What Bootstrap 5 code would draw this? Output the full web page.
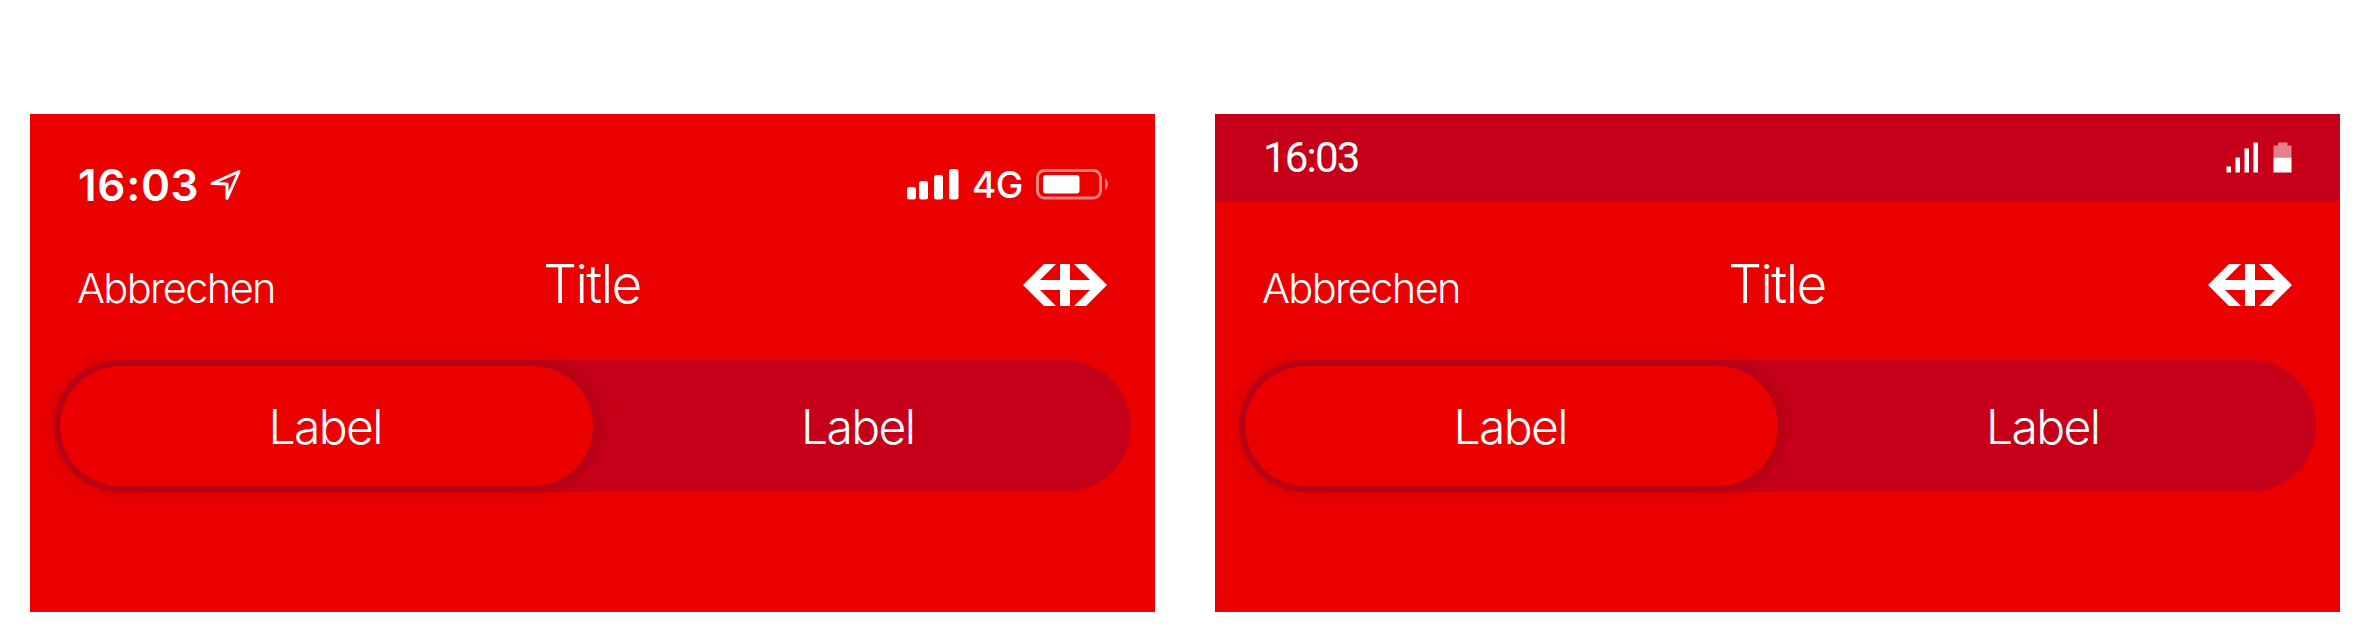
<!DOCTYPE html>
<html lang="de">
<head>
<meta charset="utf-8">
<meta name="viewport" content="width=device-width, initial-scale=1">
<title>Segmented header</title>
<link href="https://cdn.jsdelivr.net/npm/bootstrap@5.3.0/dist/css/bootstrap.min.css" rel="stylesheet">
<style>
  :root { --red: #eb0000; --red-dark: #c60018; }
  body { background: #fff; font-family: Inter, "Liberation Sans", sans-serif; }
  svg { display: block; flex: none; }
  .stage { padding: 114px 30px 30px; gap: 60px; }
  .phone { width: 1125px; height: 498px; background: var(--red); }
  .status-ios { height: 141px; padding: 0 46px 0 48px; }
  .status-ios .clock { font-size: 44px; font-weight: 600; line-height: 60px; letter-spacing: .7px; }
  .status-ios .net { font-size: 37px; font-weight: 500; line-height: 60px; margin: 0 13px 0 13px; letter-spacing: -.5px; }
  .status-android { height: 87px; margin-bottom: 54px; padding: 0 48px; background: var(--red-dark); font-family: Roboto, sans-serif; }
  .status-android .clock { font-size: 42px; line-height: 60px; letter-spacing: -1.8px; }
  .titlebar { display: grid; grid-template: 60px / 1fr auto 1fr; height: 60px; padding: 0 48px 0 47px; }
  .titlebar .btn-cancel { font-size: 41.5px; font-weight: 300; line-height: 60px; padding-top: 5px; letter-spacing: -1.6px; }
  .titlebar h1 { font-size: 53px; font-weight: 300; line-height: 60px; margin: 0; padding-bottom: 3px; letter-spacing: -1.5px; }
  .segment { height: 132px; margin: 45px 24px 0; padding: 6px; background: var(--red-dark); }
  .segment button { font-size: 48px; font-weight: 300; line-height: 60px; letter-spacing: -1.6px; padding: 2px 2px 0 0; }
  .segment .chosen { background: var(--red); box-shadow: 0 0 24px rgba(0, 0, 0, .2); }
</style>
</head>
<body>
<main class="stage d-flex text-white">

  <section class="phone">
    <div class="status-ios d-flex align-items-center justify-content-between">
      <div class="d-flex align-items-center">
        <span class="clock">16:03</span>
        <svg class="ms-2" width="34" height="34" viewBox="0 0 34 34" fill="none" stroke="#fff" stroke-width="3" stroke-linejoin="round"><path d="M5 15.500 32 3.500 20 30.500V16Z"/></svg>
      </div>
      <div class="d-flex align-items-center">
        <svg width="52" height="31" viewBox="0 0 52 31" fill="#fff"><rect y="18" width="9" height="12.500" rx="2.500"/><rect x="12" y="12" width="9" height="18.500" rx="2.500"/><rect x="27" y="6" width="9" height="24.500" rx="2.500"/><rect x="42" width="9.500" height="30.500" rx="2.500"/></svg>
        <span class="net">4G</span>
        <svg width="73" height="31" viewBox="0 0 73 31"><rect x="1.500" y="1.500" width="63" height="27.500" rx="7" fill="none" stroke="#fff" stroke-opacity=".5" stroke-width="3"/><rect x="7" y="6" width="36.500" height="18.500" rx="3" fill="#fff"/><path d="M69 9.500C73 12 73 18.500 69 21Z" fill="#fff" fill-opacity=".5"/></svg>
      </div>
    </div>
    <header class="titlebar align-items-center">
      <button class="btn-cancel btn border-0 rounded-0 px-0 pb-0 text-white text-start">Abbrechen</button>
      <h1>Title</h1>
      <svg class="ms-auto" width="84" height="42" viewBox="0 0 84 42" fill="#fff"><path d="M0 21 21 0H33L17 16H37V0H47V16H67L51 0H63L84 21 63 42H51L67 26H47V42H37V26H17L33 42H21Z"/></svg>
    </header>
    <div class="segment d-flex rounded-pill" role="group">
      <button class="chosen btn border-0 rounded-pill text-white flex-fill w-50">Label</button>
      <button class="btn border-0 rounded-pill text-white flex-fill w-50">Label</button>
    </div>
  </section>

  <section class="phone">
    <div class="status-android d-flex align-items-center justify-content-between">
      <span class="clock">16:03</span>
      <svg width="66" height="31" viewBox="0 0 66 31" fill="#fff"><path d="M.5 24.500H5V30.500H.5ZM9.500 15.500H14V30.500H9.500ZM18.500 6.500H23V30.500H18.500ZM27.500 .5H32V30.500H27.500ZM47.500 15.500H65.500V30.500H47.500Z"/><path fill-opacity=".5" d="M47.500 15.500V3.500H52V.5H61.500V3.500H65.500V15.500Z"/></svg>
    </div>
    <header class="titlebar align-items-center">
      <button class="btn-cancel btn border-0 rounded-0 px-0 pb-0 text-white text-start">Abbrechen</button>
      <h1>Title</h1>
      <svg class="ms-auto" width="84" height="42" viewBox="0 0 84 42" fill="#fff"><path d="M0 21 21 0H33L17 16H37V0H47V16H67L51 0H63L84 21 63 42H51L67 26H47V42H37V26H17L33 42H21Z"/></svg>
    </header>
    <div class="segment d-flex rounded-pill" role="group">
      <button class="chosen btn border-0 rounded-pill text-white flex-fill w-50">Label</button>
      <button class="btn border-0 rounded-pill text-white flex-fill w-50">Label</button>
    </div>
  </section>

</main>
<script src="https://cdn.jsdelivr.net/npm/bootstrap@5.3.0/dist/js/bootstrap.bundle.min.js"></script>
</body>
</html>
